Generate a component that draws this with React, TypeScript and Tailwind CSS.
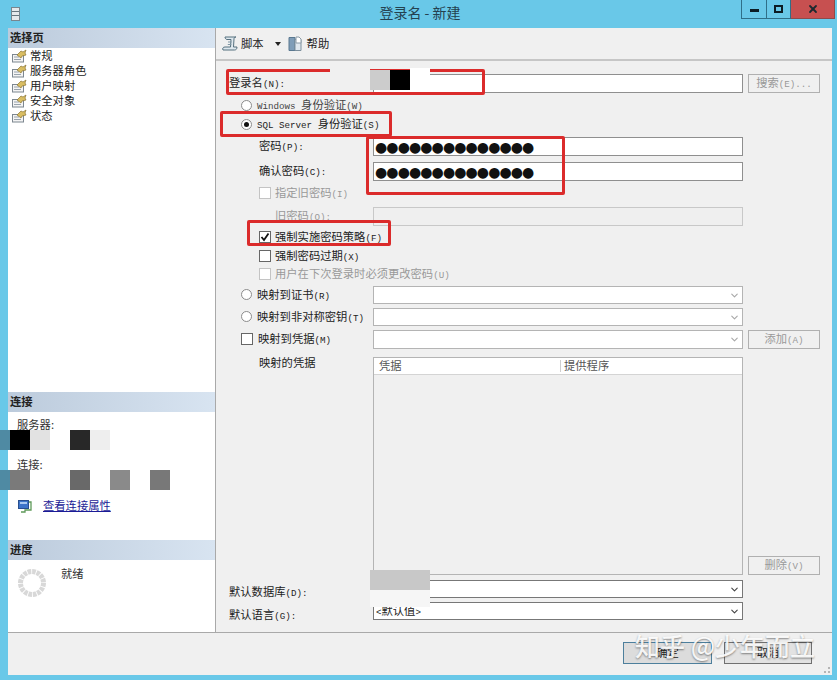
import React from 'react';
import { ChevronDown, X } from 'lucide-react';

const MONO = "font-['Liberation_Mono',monospace] text-[9.2px]";

// SimSun look: latin runs are narrow and monospaced, hanzi stay at full size
const Txt: React.FC<{ t: string; className?: string }> = ({ t, className = '' }) => (
  <span className={`whitespace-pre ${className}`}>
    {t.split(/([\x20-\x7e]+)/).map((part, i) =>
      /^[\x20-\x7e]+$/.test(part) ? <span key={i} className={MONO}>{part}</span> : part
    )}
  </span>
);

const PageIcon = () => (
  <svg width="16" height="14" viewBox="0 0 16 14" className="shrink-0">
    <rect x="1.5" y="5.5" width="11" height="7.5" fill="#f4f4f4" stroke="#7d8790" />
    <path d="M3 8h5M3 10.5h7" stroke="#9aa4ad" />
    <path d="M6 6l4-4 2 1 3-2-1 3 1 2-4 1-1 2z" fill="#d9bd62" stroke="#8a7434" strokeWidth="0.7" />
  </svg>
);

const Radio: React.FC<{ on?: boolean }> = ({ on }) => (
  <span className="w-[11px] h-[11px] rounded-full border border-[#8c8c8c] bg-white flex items-center justify-center shrink-0">
    {on && <span className="w-[5px] h-[5px] rounded-full bg-[#111]" />}
  </span>
);

const Check: React.FC<{ on?: boolean; off?: boolean }> = ({ on, off }) => (
  <span className={`w-[12px] h-[12px] border bg-white flex items-center justify-center shrink-0 ${off ? 'border-[#c4c4c4] bg-[#f0f0f0]' : 'border-[#666]'}`}>
    {on && (
      <svg width="10" height="10" viewBox="0 0 10 10">
        <path d="M1.5 5l2.5 3 4.5-6.5" fill="none" stroke="#111" strokeWidth="1.8" />
      </svg>
    )}
  </span>
);

const Field: React.FC<{ children?: React.ReactNode; off?: boolean; className?: string }> = ({ children, off, className = '' }) => (
  <div className={`w-[370px] border flex items-center px-[2px] ${off ? 'border-[#c8c8c8] bg-[#efefef]' : 'border-[#8f8f8f] bg-white'} ${className}`}>
    {children}
  </div>
);

const Dots = () => (
  <span className="text-[#111] text-[14px] leading-none font-['DejaVu_Sans',sans-serif] tracking-[-0.9px] -ml-[1px]">
    {'●●●●●●●●●●●●●●'}
  </span>
);

const Select: React.FC<{ off?: boolean; className?: string; children?: React.ReactNode }> = ({ off, className = '', children }) => (
  <Field className={`justify-between ${off ? 'border-[#b4b4b4] bg-white' : 'border-[#777]'} ${className}`}>
    <span>{children}</span>
    <ChevronDown size={11} strokeWidth={2.4} className={off ? 'text-[#a8a8a8]' : 'text-[#444]'} />
  </Field>
);

const Btn: React.FC<{ t: string }> = ({ t }) => (
  <div className="w-[72px] h-[19px] ml-[5px] border border-[#b0b0b0] flex items-center justify-center text-[#999]">
    <Txt t={t} />
  </div>
);

const SideHeader: React.FC<{ t: string }> = ({ t }) => (
  <div className="h-[20px] pl-[2px] flex items-center font-bold text-[#222] bg-gradient-to-r from-[#bccbdc] to-[#d8e4f1]">{t}</div>
);

const Annot: React.FC<{ className: string }> = ({ className }) => (
  <div className={`absolute border-[3px] border-[#db2b2b] rounded-[2px] ${className}`} />
);

const Block: React.FC<{ className: string }> = ({ className }) => <div className={`absolute ${className}`} />;

const pages = ['常规', '服务器角色', '用户映射', '安全对象', '状态'];

export default function App() {
  return (
    <div className="relative w-[837px] h-[680px] overflow-hidden flex flex-col bg-[#69c8e8] text-[11.3px] leading-none text-[#222] font-['Noto_Sans_CJK_SC',sans-serif]">
      {/* title bar */}
      <div className="h-[28px] grid grid-cols-[1fr_auto_1fr] shrink-0">
        <div className="pl-[11px] pt-[7px]">
          <svg width="9" height="14" viewBox="0 0 9 14">
            <rect x="0.5" y="0.5" width="8" height="13" fill="#e6e9ec" stroke="#78868f" />
            <path d="M1 4.5h7M1 8.5h7" stroke="#67757e" strokeWidth="1.2" />
          </svg>
        </div>
        <div className="pt-[4px] pl-[3px] text-[14px] leading-[17px] text-[#24414f]">登录名 - 新建</div>
        <div className="flex justify-end items-start pr-[2px]">
          <div className="w-[26px] h-[19px] border border-t-0 border-[#2f6f88] flex items-center justify-center">
            <div className="w-[9px] h-[3px] mt-[3px] bg-[#0c1c24]" />
          </div>
          <div className="w-[24px] h-[19px] border border-l-0 border-t-0 border-[#2f6f88] flex items-center justify-center">
            <div className="w-[9px] h-[8px] border-2 border-[#0c1c24]" />
          </div>
          <div className="w-[44px] h-[19px] bg-[#c75050] border-b border-r border-[#8f4a4a] flex items-center justify-center">
            <X size={12} strokeWidth={3.6} className="text-[#1d2a30]" />
          </div>
        </div>
      </div>

      <div className="flex-1 ml-[8px] mr-[5px] mb-[5px] flex flex-col min-h-0">
        <div className="flex-1 flex min-h-0">
          {/* left column */}
          <div className="w-[207px] shrink-0 bg-white flex flex-col">
            <SideHeader t="选择页" />
            <div className="pl-[3px] flex flex-col">
              {pages.map((p) => (
                <div key={p} className="h-[15px] flex items-center gap-[3px]">
                  <PageIcon />
                  <span>{p}</span>
                </div>
              ))}
            </div>
            <div className="flex-1" />
            <SideHeader t="连接" />
            <div className="h-[128px] pl-[9px] flex flex-col text-[#333]">
              <div className="mt-[7px]">服务器:</div>
              <div className="mt-[29px]">连接:</div>
              <div className="mt-[28px] flex items-center gap-[11px] pl-[1px]">
                <svg width="14" height="15" viewBox="0 0 14 15">
                  <rect x="0.5" y="1.5" width="10" height="8" fill="#3d74c9" stroke="#284f8f" />
                  <rect x="2" y="3" width="7" height="2" fill="#a9c8f0" />
                  <path d="M11 3h2v8H7v2H3" fill="none" stroke="#5f9a5a" strokeWidth="1.3" />
                </svg>
                <span className="text-[#1b1b96] underline">查看连接属性</span>
              </div>
            </div>
            <SideHeader t="进度" />
            <div className="h-[72px] pl-[9px] pt-[8px] flex items-start gap-[14px]">
              <svg width="30" height="30" viewBox="0 0 30 30">
                <circle cx="15" cy="15" r="11.5" fill="none" stroke="#d8d8d8" strokeWidth="5" strokeDasharray="3.6 0.9" />
              </svg>
              <span className="text-[#333]">就绪</span>
            </div>
          </div>

          {/* right column */}
          <div className="flex-1 bg-[#f0f0f0] border-l border-[#a9a9a9] flex flex-col">
            <div className="h-[33px] border-b-2 border-[#c6c6c6] flex items-center pl-[6px] text-[#222]">
              <svg width="16" height="17" viewBox="0 0 16 17">
                <path d="M3 2h11c-1.5 0-2 1-2 2l-.5 8H15c0 2-1 3-2.5 3H1c-.8-1.5 0-3 2-3h5.500L9 4.500H5C3.800 4.500 3 3.200 3 2z" fill="#dfe8ee" stroke="#55707f" />
                <path d="M6 7h3.500M5.800 9.500h3.500" stroke="#7f97a5" />
              </svg>
              <span className="ml-[3px]">脚本</span>
              <span className="ml-[11px] w-0 h-0 border-x-[3.5px] border-x-transparent border-t-[4px] border-t-[#222]" />
              <svg width="15" height="16" viewBox="0 0 15 16" className="ml-[7px]">
                <path d="M1 1.500h6v13H1z" fill="#7f9db8" stroke="#5a7890" />
                <path d="M7 3.500h6v11H7z" fill="#dfe7ee" stroke="#7c8f9d" />
                <path d="M8 1h3l2 2v4H8z" fill="#fff" stroke="#8a9aa6" />
              </svg>
              <span className="ml-[4px]">帮助</span>
            </div>

            <div className="flex-1 flex flex-col pt-[13px]">
              <div className="flex h-[19px] items-center">
                <div className="w-[157px] pl-[13px]"><Txt t="登录名(N):" /></div>
                <Field className="h-[19px]" />
                <Btn t="搜索(E)..." />
              </div>
              <div className="flex h-[18px] mt-[3px] items-center gap-[5px] pl-[25px] text-[#444]">
                <Radio />
                <Txt t="Windows 身份验证(W)" />
              </div>
              <div className="flex h-[18px] mt-[1px] items-center gap-[5px] pl-[25px]">
                <Radio on />
                <Txt t="SQL Server 身份验证(S)" />
              </div>
              <div className="flex h-[19px] mt-[4px] items-center">
                <div className="w-[157px] pl-[43px]"><Txt t="密码(P):" /></div>
                <Field className="h-[19px]"><Dots /></Field>
              </div>
              <div className="flex h-[19px] mt-[6px] items-center">
                <div className="w-[157px] pl-[43px]"><Txt t="确认密码(C):" /></div>
                <Field className="h-[19px]"><Dots /></Field>
              </div>
              <div className="flex h-[14px] mt-[5px] items-center gap-[4px] pl-[43px] text-[#999]">
                <Check off />
                <Txt t="指定旧密码(I)" />
              </div>
              <div className="flex h-[19px] mt-[7px] items-center">
                <div className="w-[157px] pl-[59px] text-[#999]"><Txt t="旧密码(O):" /></div>
                <Field off className="h-[19px]" />
              </div>
              <div className="flex h-[14px] mt-[4px] items-center gap-[4px] pl-[43px]">
                <Check on />
                <Txt t="强制实施密码策略(F)" />
              </div>
              <div className="flex h-[14px] mt-[5px] items-center gap-[4px] pl-[43px]">
                <Check />
                <Txt t="强制密码过期(X)" />
              </div>
              <div className="flex h-[14px] mt-[4px] items-center gap-[4px] pl-[43px] text-[#999]">
                <Check off />
                <Txt t="用户在下次登录时必须更改密码(U)" />
              </div>
              <div className="flex h-[18px] mt-[5px] items-center">
                <div className="w-[157px] pl-[25px] flex items-center gap-[5px]">
                  <Radio />
                  <Txt t="映射到证书(R)" />
                </div>
                <Select off className="h-[18px]" />
              </div>
              <div className="flex h-[18px] mt-[4px] items-center">
                <div className="w-[157px] pl-[25px] flex items-center gap-[5px]">
                  <Radio />
                  <Txt t="映射到非对称密钥(T)" />
                </div>
                <Select off className="h-[18px]" />
              </div>
              <div className="flex h-[19px] mt-[4px] items-center">
                <div className="w-[157px] pl-[25px] flex items-center gap-[5px]">
                  <Check />
                  <Txt t="映射到凭据(M)" />
                </div>
                <Select off className="h-[19px]" />
                <Btn t="添加(A)" />
              </div>
              <div className="flex h-[218px] mt-[8px] items-start">
                <div className="w-[157px] pl-[43px]">映射的凭据</div>
                <div className="w-[370px] h-full border border-[#b4b4b4] flex flex-col">
                  <div className="h-[17px] bg-white border-b border-[#d4d4d4] flex items-center text-[#555]">
                    <div className="w-[187px] pl-[5px] border-r border-[#cfcfcf]">凭据</div>
                    <div className="pl-[3px]">提供程序</div>
                  </div>
                </div>
                <div className="self-end"><Btn t="删除(V)" /></div>
              </div>
              <div className="flex h-[18px] mt-[5px] items-center">
                <div className="w-[157px] pl-[13px] pt-[6px]"><Txt t="默认数据库(D):" /></div>
                <Select className="h-[18px]" />
              </div>
              <div className="flex h-[18px] mt-[4px] items-center">
                <div className="w-[157px] pl-[13px] pt-[8px]"><Txt t="默认语言(G):" /></div>
                <Select className="h-[18px]"><Txt t="<默认值>" /></Select>
              </div>
            </div>
          </div>
        </div>

        {/* footer */}
        <div className="h-[43px] shrink-0 bg-[#f0f0f0] border-t border-[#a9a9a9] flex justify-end items-start pt-[9px] pr-[20px] gap-[12px] relative">
          <div className="w-[89px] h-[22px] bg-[#dcdcdc] border border-[#4d7f9c] flex items-center justify-center">确定</div>
          <div className="w-[88px] h-[22px] bg-[#e2e2e2] border border-[#707070] flex items-center justify-center">取消</div>
          <div className="absolute right-[2px] bottom-[2px] w-[6px] h-[6px] border-r-2 border-b-2 border-dotted border-[#b5b5b5]" />
        </div>
      </div>

      {/* mosaic blocks covering names */}
      <Block className="left-[0px] top-[430px] w-[10px] h-[20px] bg-[#4f8aa3]" />
      <Block className="left-[10px] top-[430px] w-[20px] h-[20px] bg-black" />
      <Block className="left-[30px] top-[430px] w-[20px] h-[20px] bg-[#e2e2e2]" />
      <Block className="left-[70px] top-[430px] w-[20px] h-[20px] bg-[#282828]" />
      <Block className="left-[90px] top-[430px] w-[20px] h-[20px] bg-[#eeeeee]" />
      <Block className="left-[0px] top-[470px] w-[10px] h-[20px] bg-[#4f8aa3]" />
      <Block className="left-[10px] top-[470px] w-[20px] h-[20px] bg-[#7a7a7a]" />
      <Block className="left-[70px] top-[470px] w-[20px] h-[20px] bg-[#696969]" />
      <Block className="left-[110px] top-[470px] w-[20px] h-[20px] bg-[#8a8a8a]" />
      <Block className="left-[150px] top-[470px] w-[20px] h-[20px] bg-[#787878]" />
      <Block className="left-[370px] top-[590px] w-[60px] h-[17px] bg-[#f6f6f6]" />

      {/* red annotations */}
      <Annot className="left-[226px] top-[69px] w-[259px] h-[26px]" />
      <Annot className="left-[220px] top-[111px] w-[172px] h-[26px]" />
      <Annot className="left-[366px] top-[136px] w-[199px] h-[59px]" />
      <Annot className="left-[247px] top-[220px] w-[144px] h-[26px]" />

      <Block className="left-[330px] top-[68px] w-[40px] h-[5px] bg-[#f0f0f0]" />
      <Block className="left-[370px] top-[70px] w-[20px] h-[20px] bg-[#cccccc]" />
      <Block className="left-[390px] top-[70px] w-[20px] h-[20px] bg-black" />
      <Block className="left-[410px] top-[68px] w-[20px] h-[22px] bg-white" />
      <Block className="left-[370px] top-[570px] w-[60px] h-[20px] bg-[#c8c8c8]" />

      {/* watermark */}
      <div className="absolute left-[635px] top-[630px] text-[25px] leading-[30px] font-medium text-white/90 [text-shadow:0_1px_2px_rgba(0,0,0,0.45)] whitespace-nowrap">
        知乎 @少年而立
      </div>
    </div>
  );
}
